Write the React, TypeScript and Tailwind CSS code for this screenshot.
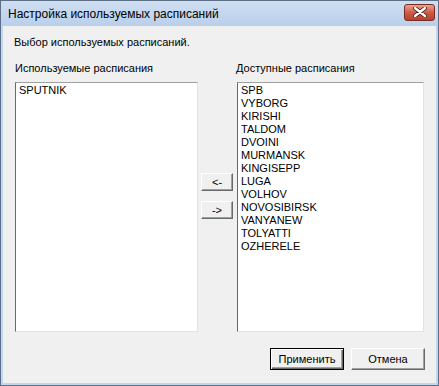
const USED = ["SPUTNIK"];
const AVAILABLE = [
  "SPB",
  "VYBORG",
  "KIRISHI",
  "TALDOM",
  "DVOINI",
  "MURMANSK",
  "KINGISEPP",
  "LUGA",
  "VOLHOV",
  "NOVOSIBIRSK",
  "VANYANEW",
  "TOLYATTI",
  "OZHERELE",
];

function ListBox({ items, width }: { items: string[]; width: string }) {
  return (
    <div
      className={`${width} h-[250px] bg-white border border-t-[#a0a0a0] border-l-[#696969] border-r-[#e3e3e3] border-b-[#e3e3e3] pl-[3px] pt-[1px]`}
    >
      {items.map((it) => (
        <div key={it} className="h-[13px] leading-[13px] text-black">
          {it}
        </div>
      ))}
    </div>
  );
}

function SmallButton({ label }: { label: string }) {
  return (
    <button className="w-[32px] h-[18px] bg-[#f0f0f0] border border-t-white border-l-white border-r-[#696969] border-b-[#696969] shadow-[inset_-1px_-1px_0_#a0a0a0] text-[11px] leading-none text-black">
      {label}
    </button>
  );
}

export default function App() {
  return (
    <div
      className="w-[439px] h-[386px] border border-[#5d6f86] bg-[#c2d6ee] flex flex-col text-[11px] text-black"
      style={{ fontFamily: '"Liberation Sans", Arial, sans-serif' }}
    >
      {/* Заголовок */}
      <div className="h-[25px] flex items-center justify-between pl-[7px] pr-[3px] bg-gradient-to-b from-[#cfdff2] to-[#b9cfea]">
        <span className="text-[12px] text-black">Настройка используемых расписаний</span>
        <div className="w-[31px] h-[17px] mt-[-3px] rounded-[3px] border border-[#7a2b22] bg-gradient-to-b from-[#e9a293] via-[#cf5a45] to-[#b9402c] flex items-center justify-center">
          <svg width="14" height="10" viewBox="0 0 14 10">
            <path
              d="M2 1 L12 9 M12 1 L2 9"
              stroke="#3a1a14"
              strokeWidth="4"
              strokeLinecap="round"
            />
            <path
              d="M2 1 L12 9 M12 1 L2 9"
              stroke="#ffffff"
              strokeWidth="2.4"
              strokeLinecap="round"
            />
          </svg>
        </div>
      </div>

      {/* Тело окна */}
      <div className="flex-1 mx-[2px] mb-[2px] bg-[#f0f0f0] flex flex-col pl-[11px] pr-[11px]">
        <div className="mt-[10px] h-[13px] leading-[13px]">Выбор используемых расписаний.</div>

        <div className="mt-[13px] flex">
          <div className="w-[186px] pl-[1px] h-[13px] leading-[13px]">Используемые расписания</div>
          <div className="ml-[36px] h-[13px] leading-[13px]">Доступные расписания</div>
        </div>

        <div className="mt-[7px] flex items-start">
          <div className="ml-[1px]">
            <ListBox items={USED} width="w-[183px]" />
          </div>
          <div className="ml-[3px] mt-[91px] flex flex-col gap-[10px]">
            <SmallButton label="<-" />
            <SmallButton label="->" />
          </div>
          <div className="ml-[4px]">
            <ListBox items={AVAILABLE} width="w-[187px]" />
          </div>
        </div>

        <div className="mt-[16px] flex justify-end gap-[7px] pr-[0px]">
          <button className="w-[74px] h-[22px] bg-[#f0f0f0] border border-black shadow-[inset_1px_1px_0_#ffffff,inset_-1px_-1px_0_#696969,inset_-2px_-2px_0_#a0a0a0] text-[11px] text-black">
            Применить
          </button>
          <button className="w-[74px] h-[22px] bg-[#f0f0f0] border border-t-white border-l-white border-r-[#696969] border-b-[#696969] shadow-[inset_-1px_-1px_0_#a0a0a0] text-[11px] text-black">
            Отмена
          </button>
        </div>
      </div>
    </div>
  );
}
